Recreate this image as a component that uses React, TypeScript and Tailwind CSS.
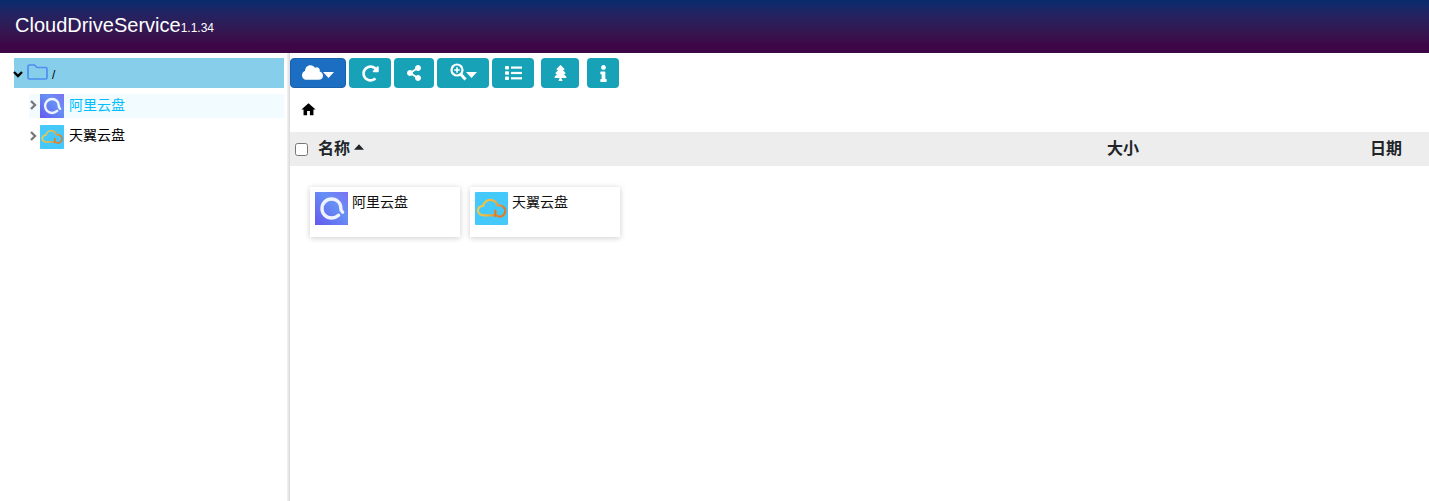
import { FaCloud, FaRedoAlt, FaShareAlt, FaTree, FaInfo } from "react-icons/fa";
import { MdHome } from "react-icons/md";
import { useId } from "react";
import type { ReactNode } from "react";

function Ali({ size }: { size: number }) {
  const id = useId();
  return (
    <svg width={size} height={size} viewBox="0 0 33 33" className="shrink-0 block">
      <defs>
        <linearGradient id={id} x1="0" y1="1" x2="1" y2="0">
          <stop offset="0" stopColor="#6458ee" />
          <stop offset="0.6" stopColor="#6690f5" />
          <stop offset="1" stopColor="#7c72f5" />
        </linearGradient>
      </defs>
      <rect width="33" height="33" fill={`url(#${id})`} />
      <path d="M23.6 23.2 C21.6 25 19.4 26 16.6 26 C11.2 26 7 21.8 7 16.5 C7 11.2 11.2 7 16.6 7 C21.8 7 25.8 11 25.8 15.8 C25.8 17.4 25.6 18.8 27.6 20.2" fill="none" stroke="#fff" strokeWidth="3.4" strokeLinecap="round" opacity="0.9" />
    </svg>
  );
}

function Tianyi({ size }: { size: number }) {
  const id = useId();
  return (
    <svg width={size} height={size} viewBox="0 0 33 33" className="shrink-0 block">
      <defs>
        <linearGradient id={id} x1="0" y1="0" x2="1" y2="0.3">
          <stop offset="0" stopColor="#f3d34e" />
          <stop offset="0.6" stopColor="#eeb23f" />
          <stop offset="1" stopColor="#e07a2b" />
        </linearGradient>
      </defs>
      <rect width="33" height="33" rx="1" fill="#45c9fb" />
      <path d="M18.5 23.3 H9 C5 23.3 2.8 20.8 3 18.2 C3.2 15.7 5.4 14 8 14 C9 10 12.5 7.6 16 8 C19.5 8.4 21.6 10.5 22.6 13.3 C27 12.8 30.3 15.4 30.3 19 C30.3 22.4 27.5 24.8 24.3 24.6 C21.4 24.4 19.8 22 20.6 19.6" fill="none" stroke={`url(#${id})`} strokeWidth="2.2" strokeLinecap="round" />
      <path d="M20.3 18.5 L20.3 24" fill="none" stroke="#e07a2b" strokeWidth="2" strokeLinecap="round" />
    </svg>
  );
}

function Caret({ up, className }: { up?: boolean; className?: string }) {
  return (
    <svg width="11" height="6" viewBox="0 0 11 6" className={`shrink-0 ${className ?? ""}`} fill="currentColor">
      <path d={up ? "M0 6 L5.5 0 L11 6 Z" : "M0 0 H11 L5.5 6 Z"} />
    </svg>
  );
}

function Chevron({ down, className }: { down?: boolean; className?: string }) {
  return (
    <svg width="10" height="10" viewBox="0 0 10 10" className={`shrink-0 ${className ?? ""}`} fill="none" stroke="currentColor" strokeWidth="2.4">
      <path d={down ? "M1 3 L5 7 L9 3" : "M3 1 L7 5 L3 9"} />
    </svg>
  );
}

function Btn({ w, ml, blue, children }: { w: string; ml: string; blue?: boolean; children: ReactNode }) {
  return (
    <button className={`${w} ${ml} ${blue ? "bg-[#1b6ec2] border border-[#1861ac]" : "bg-[#17a2b8]"} h-[30px] rounded-[4px] flex items-center justify-center text-white shrink-0`}>
      {children}
    </button>
  );
}

function TreeRow({ active, icon, label, labelClass }: { active?: boolean; icon: ReactNode; label: string; labelClass: string }) {
  return (
    <div className={`ml-[15px] mr-[3px] h-[24px] flex items-center ${active ? "bg-[#f2fbff] text-[#00bfff]" : "text-black"}`}>
      <Chevron className="text-[#7a7a7a] -mt-[2px] -ml-[1px]" />
      <span className="ml-[2px]">{icon}</span>
      <span className={`ml-[5px] text-[14px] leading-[20px] relative ${labelClass}`}>{label}</span>
    </div>
  );
}

function Card({ ml, icon, label }: { ml?: string; icon: ReactNode; label: string }) {
  return (
    <div className={`w-[150px] h-[50px] bg-white shadow-[0_1px_6px_rgba(0,0,0,0.2)] flex items-start p-[5px] ${ml ?? ""}`}>
      {icon}
      <span className="ml-[4px] text-[14px] leading-[20px] text-[#111]">{label}</span>
    </div>
  );
}

export default function App() {
  return (
    <div className="w-[1429px] h-[501px] overflow-hidden bg-white flex flex-col font-['Liberation_Sans','Noto_Sans_CJK_SC',sans-serif]">
      <header className="h-[53px] shrink-0 bg-gradient-to-b from-[#0b2a6b] from-[5%] to-[#3d0646] to-[85%] flex items-center pl-[15px] pb-[3px] text-white">
        <span className="text-[20px] leading-[24px]">CloudDriveService</span>
        <span className="text-[12px] leading-[14px] mt-[6px]">1.1.34</span>
      </header>
      <div className="flex flex-1 min-h-0">
        <aside className="w-[287px] shrink-0 pt-[5px] pl-[14px]">
          <div className="h-[30px] mr-[3px] bg-[#87ceeb] flex items-center text-black">
            <Chevron down className="-ml-[1px] mt-[1px]" />
            <svg width="21" height="16" viewBox="0 0 21 16" className="ml-[4px] -mt-[3px] shrink-0" fill="none" stroke="#4f8ff0" strokeWidth="1.7">
              <path d="M1 13.5 V2.5 A1.5 1.5 0 0 1 2.5 1 H7.5 L10 3.5 H18.5 A1.5 1.5 0 0 1 20 5 V13.5 A1.5 1.5 0 0 1 18.5 15 H2.5 A1.5 1.5 0 0 1 1 13.5 Z" />
            </svg>
            <span className="ml-[4px] text-[12px] leading-[16px] mt-[4px]">/</span>
          </div>
          <div className="mt-[6px] flex flex-col gap-[7px]">
            <TreeRow active icon={<Ali size={24} />} label="阿里云盘" labelClass="-top-[1px]" />
            <TreeRow icon={<Tianyi size={24} />} label="天翼云盘" labelClass="-top-[2px]" />
          </div>
        </aside>
        <div className="w-[3px] shrink-0 bg-gradient-to-r from-[#f3f3f3] to-[#d9d9d9]" />
        <main className="flex-1 min-w-0 flex flex-col">
          <div className="flex pt-[5px]">
            <Btn w="w-[56px]" ml="ml-0" blue>
              <FaCloud className="w-[21px] h-[19px] -mt-[1px]" />
              <Caret className="mt-[4px]" />
            </Btn>
            <Btn w="w-[42px]" ml="ml-[3px]"><FaRedoAlt className="w-[17px] h-[17px]" /></Btn>
            <Btn w="w-[40px]" ml="ml-[3px]"><FaShareAlt className="w-[16px] h-[16px]" /></Btn>
            <Btn w="w-[52px]" ml="ml-[3px]">
              <svg width="17" height="18" viewBox="0 0 17 18" fill="none" stroke="currentColor" className="-mt-[2px]">
                <circle cx="7" cy="7" r="5.5" strokeWidth="2.2" />
                <path d="M7 4.2 V9.8 M4.2 7 H9.8" strokeWidth="1.6" />
                <path d="M11 11.5 L15.5 16.5" strokeWidth="3" />
              </svg>
              <Caret className="mt-[4px] -ml-[1px]" />
            </Btn>
            <Btn w="w-[42px]" ml="ml-[3px]">
              <svg width="17" height="14" viewBox="0 0 17 14" fill="currentColor">
                <rect x="0" y="0" width="4" height="3.4" rx="1" />
                <rect x="0" y="5.3" width="4" height="3.4" rx="1" />
                <rect x="0" y="10.6" width="4" height="3.4" rx="1" />
                <rect x="6" y="0.5" width="11" height="2.2" />
                <rect x="6" y="5.9" width="11" height="2.2" />
                <rect x="6" y="11.2" width="11" height="2.2" />
              </svg>
            </Btn>
            <Btn w="w-[38px]" ml="ml-[7px]"><FaTree className="w-[15px] h-[16px]" /></Btn>
            <Btn w="w-[32px]" ml="ml-[8px]"><FaInfo className="w-[15px] h-[17px]" /></Btn>
          </div>
          <div className="h-[44px] flex items-center pl-[10px]">
            <MdHome className="w-[17px] h-[17px] text-black -mt-[1px]" />
          </div>
          <div className="h-[34px] bg-[#ededed] flex items-center text-[16px] font-bold text-[#212529]">
            <input type="checkbox" className="ml-[5px] w-[13px] h-[13px] shrink-0" />
            <span className="ml-[10px]">名称</span>
            <Caret up className="ml-[4px] -mt-[4px] w-[10px] h-[6px]" />
            <span className="ml-auto mr-[231px]">大小</span>
            <span className="mr-[27px]">日期</span>
          </div>
          <div className="flex pl-[20px] pt-[21px]">
            <Card icon={<Ali size={33} />} label="阿里云盘" />
            <Card ml="ml-[10px]" icon={<Tianyi size={33} />} label="天翼云盘" />
          </div>
        </main>
      </div>
    </div>
  );
}
